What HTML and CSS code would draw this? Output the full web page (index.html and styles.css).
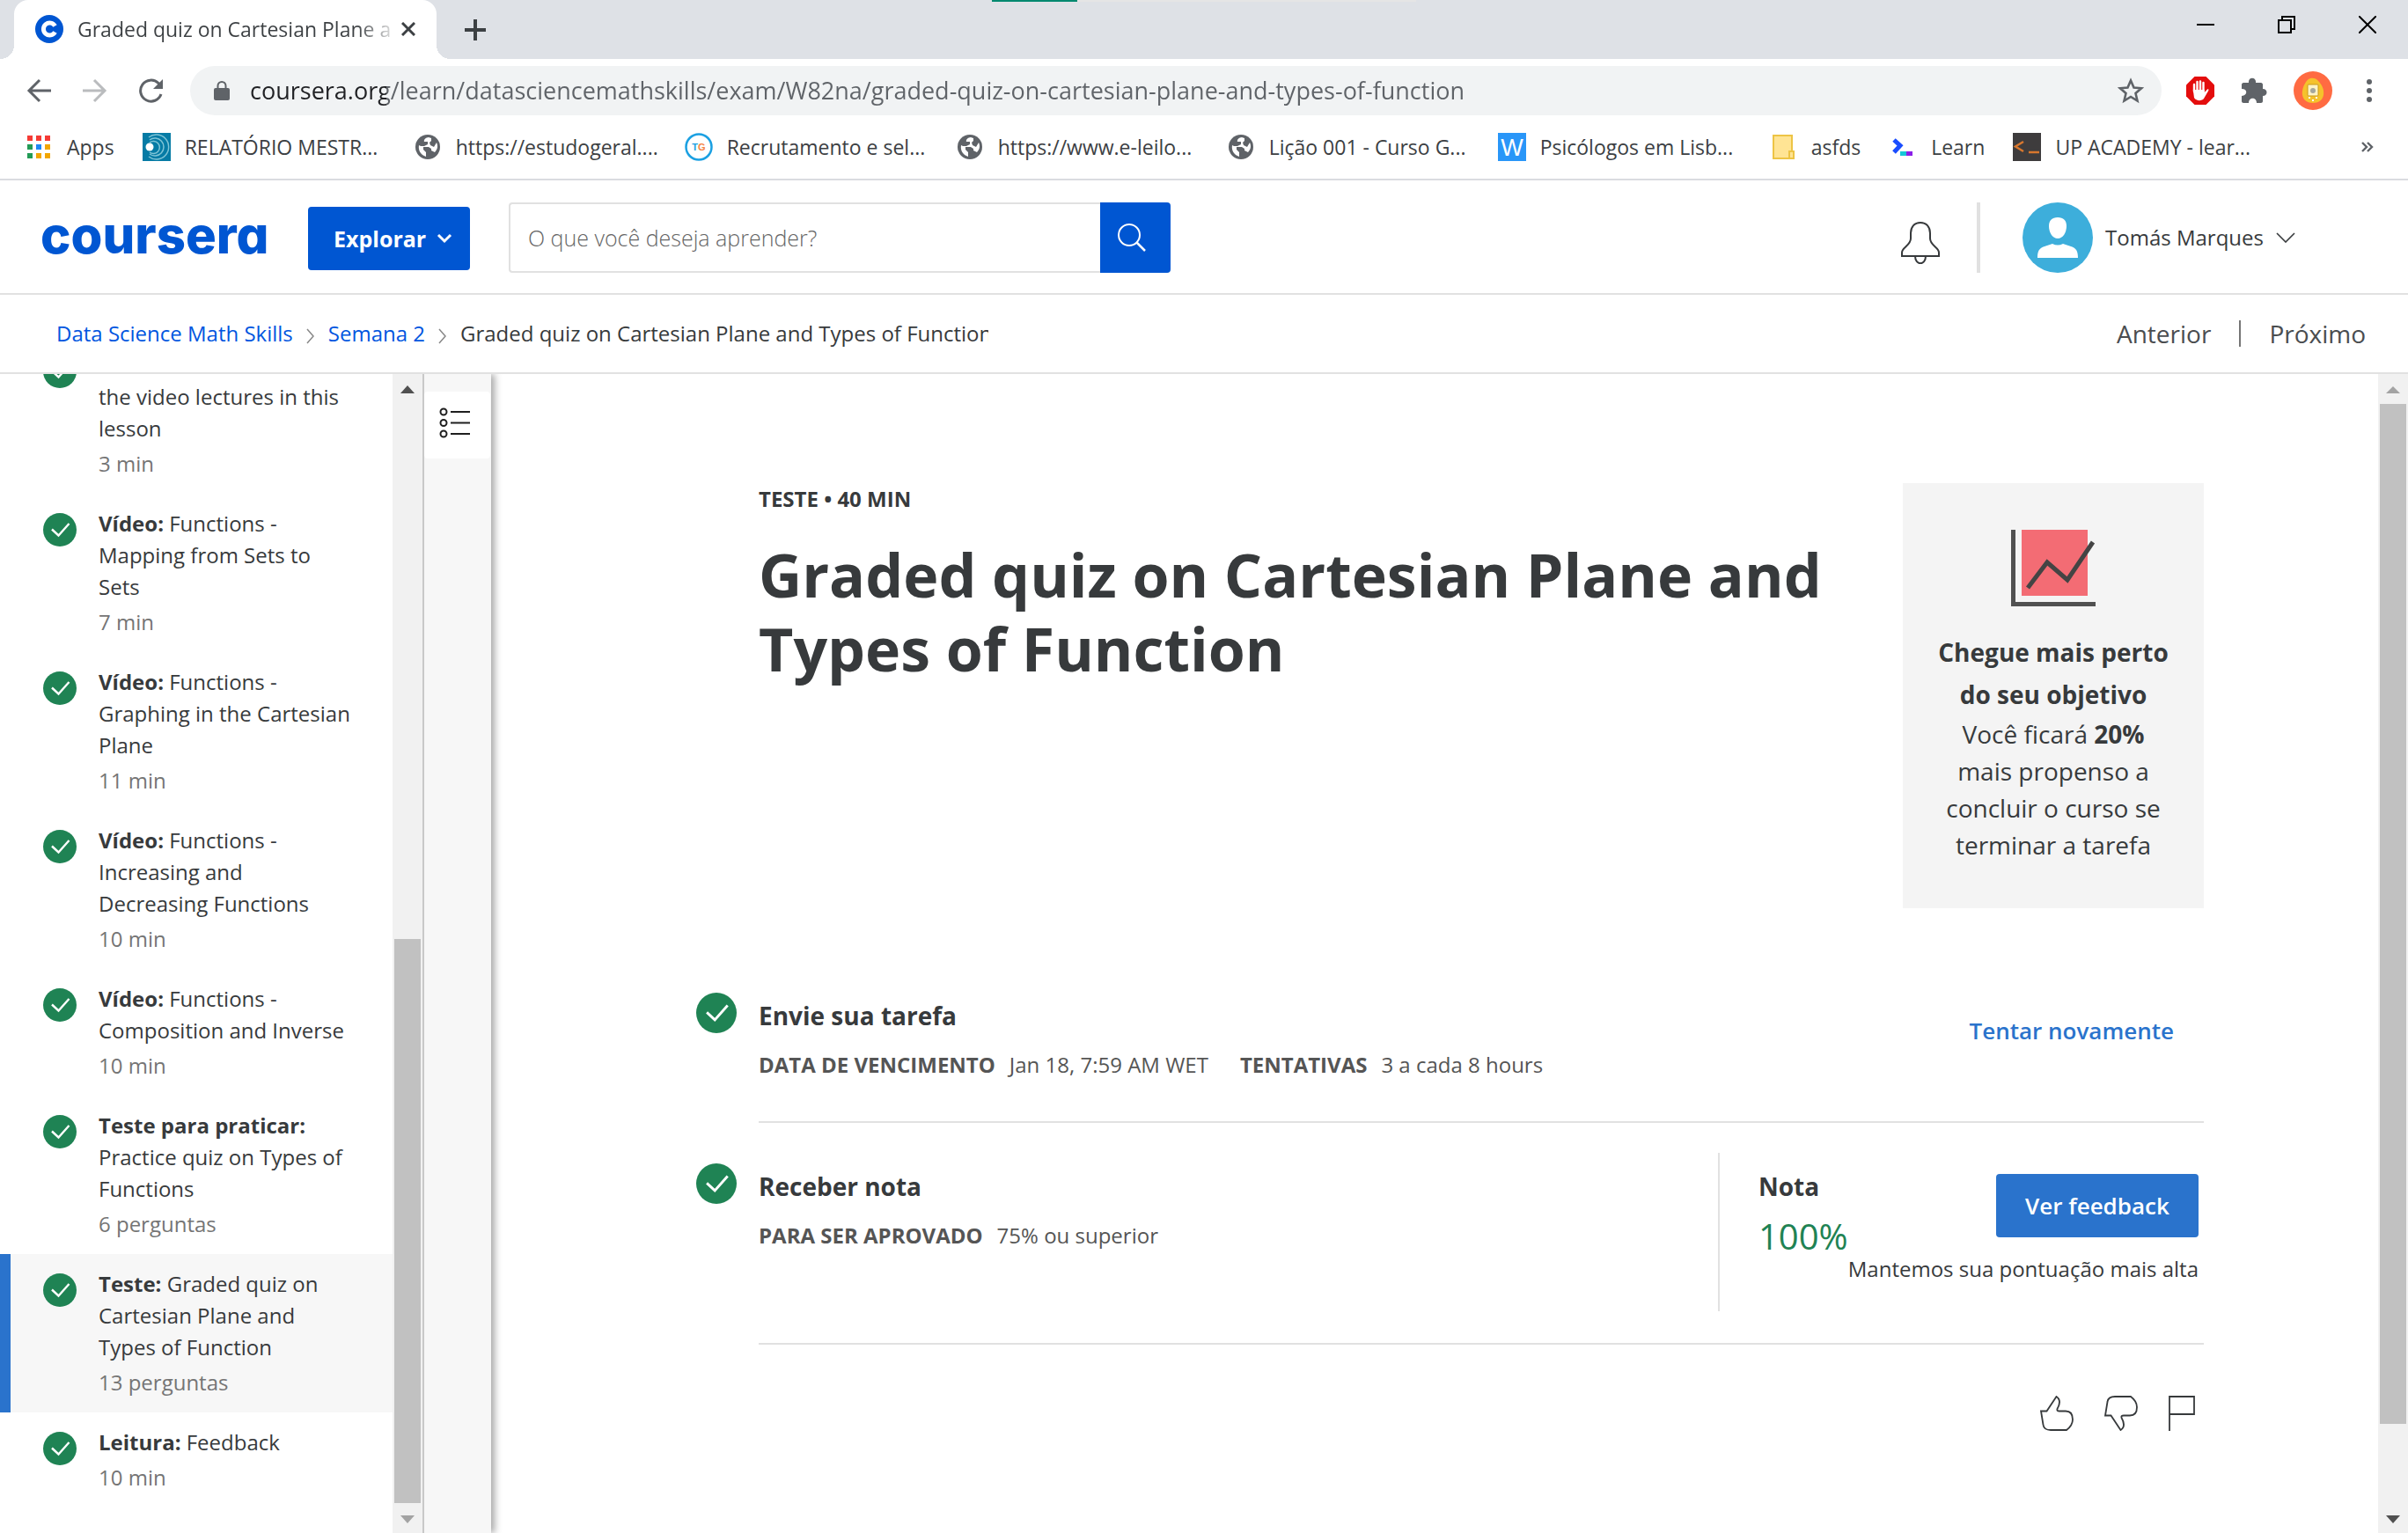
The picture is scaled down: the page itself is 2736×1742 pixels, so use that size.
FILE: index.html
```html
<!DOCTYPE html>
<html lang="pt">
<head>
<meta charset="utf-8">
<meta name="viewport" content="width=device-width, initial-scale=1">
<title>Graded quiz on Cartesian Plane and Types of Function | Coursera</title>
<link rel="stylesheet" href="styles.css">
</head>
<body>
<svg class="defs" aria-hidden="true">
  <symbol id="check" viewBox="0 0 38 38"><circle cx="19" cy="19" r="19" fill="#1f8354"/><path d="M10 18.500L17.500 25.500L29.500 12" fill="none" stroke="#fff" stroke-width="2.400"/></symbol>
  <symbol id="globe" viewBox="0 0 28 28"><circle cx="14" cy="14" r="14" fill="#5f6368"/><path d="M15 3C12 3 9 6 10 8H14V11L10 13H6L4 12C3 18 6 23 12 25V20L9 17V14H15L18 16V18L22 20C25 17 26 13 24 9L21 14L17 12L16 9L18 7V4Z" fill="#fff"/></symbol>
  <symbol id="thumb" viewBox="0 0 38 40"><path d="M1 17.500H7.500L18.500 1C23 4 23.500 8 19.500 15C19 17 20 17.500 22 17.500H29C34 17.500 37 21 37 27C37 33 34 36 30 39H12C7 39 4 37 3.500 33Z" fill="none" stroke="#373a3c" stroke-width="1.800"/></symbol>
</svg>

<header class="browser">
  <div class="tabstrip">
    <div class="tab">
      <svg class="tab-icon" viewBox="0 0 32 32"><circle cx="16" cy="16" r="16" fill="#0056d2"/><path d="M22.500 12.500A7 7 0 1 0 22.500 19.500" fill="none" stroke="#fff" stroke-width="5"/></svg>
      <span class="tab-title">Graded quiz on Cartesian Plane a</span>
      <button class="plain" aria-label="Fechar guia"><svg width="16" height="16" viewBox="0 0 16 16"><path d="M1 1L15 15M15 1L1 15" stroke="#3c4043" stroke-width="3"/></svg></button>
    </div>
    <button class="plain new-tab" aria-label="Nova guia"><svg width="24" height="24" viewBox="0 0 24 24"><path d="M12 0V24M0 12H24" stroke="#3c4043" stroke-width="4"/></svg></button>
    <div class="loading"><span class="loading-done"></span></div>
    <div class="window-controls">
      <button class="plain" aria-label="Minimizar"><svg width="20" height="20" viewBox="0 0 20 20"><path d="M0 10H20" stroke="#000" stroke-width="2"/></svg></button>
      <button class="plain" aria-label="Restaurar"><svg width="20" height="20" viewBox="0 0 20 20"><path d="M1 5H15V19H1ZM5 5V1H19V15H15" fill="none" stroke="#000" stroke-width="2"/></svg></button>
      <button class="plain" aria-label="Fechar"><svg width="20" height="20" viewBox="0 0 20 20"><path d="M0 0L20 20M20 0L0 20" stroke="#000" stroke-width="2"/></svg></button>
    </div>
  </div>

  <div class="toolbar">
    <div class="nav-buttons">
      <button class="plain" aria-label="Voltar"><svg width="28" height="28" viewBox="0 0 28 28"><path d="M28 14H3M15 2L3 14L15 26" fill="none" stroke="#5f6368" stroke-width="3"/></svg></button>
      <button class="plain" aria-label="Avançar"><svg width="28" height="28" viewBox="0 0 28 28"><path d="M0 14H25M13 2L25 14L13 26" fill="none" stroke="#babcbe" stroke-width="3"/></svg></button>
      <button class="plain" aria-label="Recarregar"><svg width="28" height="28" viewBox="0 0 28 28"><path d="M25 18A12 12 0 1 1 22 5.500L24 8" fill="none" stroke="#5f6368" stroke-width="3"/><path d="M27 1V12H16Z" fill="#5f6368"/></svg></button>
    </div>
    <form class="omnibox">
      <svg width="18" height="22" viewBox="0 0 18 22"><rect y="8" width="18" height="14" rx="2" fill="#5f6368"/><path d="M4.500 9V5.500A4.500 4.500 0 0 1 13.500 5.500V9" fill="none" stroke="#5f6368" stroke-width="2"/></svg>
      <input class="url" type="text" aria-label="Endereço" value="coursera.org/learn/datasciencemathskills/exam/W82na/graded-quiz-on-cartesian-plane-and-types-of-function">
      <button type="button" class="plain" aria-label="Favorito"><svg width="30" height="30" viewBox="0 0 30 30"><path d="M15 3.500L18.500 11.500L27 12.300L20.500 18L22.500 26.500L15 22L7.500 26.500L9.500 18L3 12.300L11.500 11.500Z" fill="none" stroke="#5f6368" stroke-width="2.600"/></svg></button>
    </form>
    <div class="extensions">
      <button class="plain" aria-label="AdBlock"><svg width="32" height="32" viewBox="0 0 32 32"><path d="M9.500 0H22.500L32 9.500V22.500L22.500 32H9.500L0 22.500V9.500Z" fill="#e40d0d"/><path d="M9 17V9M12.500 17V6M16 17V5.500M19.500 17V7" stroke="#fff" stroke-width="2.400" stroke-linecap="round"/><path d="M7.800 15H20.700V18L24 14.500C25.500 14 26 15 25 16.500L20 25C18 28 11 28 9 24Z" fill="#fff"/></svg></button>
      <button class="plain" aria-label="Extensões"><svg width="30" height="30" viewBox="0 0 30 30"><path d="M3 6H9C8 -1 18 -1 17 6H23C24 6 25 7 25 8V13C31 13 31 21 25 21V27C25 28 24 29 23 29H18C18 22 9 22 9 29H3C2 29 1 28 1 27V21C8 20 8 13 1 13V8C1 7 2 6 3 6Z" fill="#5f6368"/></svg></button>
      <button class="plain" aria-label="Perfil"><svg width="44" height="44" viewBox="0 0 44 44"><circle cx="22" cy="22" r="22" fill="#ff6b42"/><path d="M17 9C20 7 25 7 28 11C32 15 35 20 34 27C33 33 28 36 22 36S11 33 10 27C9 20 13 12 17 9Z" fill="#f5c22c"/><rect x="16" y="15" width="12" height="13" rx="1" fill="#fff3c4" stroke="#c99a1c"/><circle cx="22" cy="22" r="3" fill="#a5a79c"/><path d="M17 30h2M21 33h2M25 30h2" stroke="#fff" stroke-width="2"/></svg></button>
      <button class="plain" aria-label="Menu"><svg width="6" height="26" viewBox="0 0 6 26"><circle cx="3" cy="3" r="3"/><circle cx="3" cy="13" r="3"/><circle cx="3" cy="23" r="3"/></svg></button>
    </div>
  </div>

  <nav class="bookmarks" aria-label="Favoritos">
    <a href="#"><svg viewBox="0 0 32 32"><path d="M3 3h6v6H3zM13 3h6v6h-6zM23 3h6v6h-6z" fill="#f53b35"/><path d="M3 13h6v6H3zM3 23h6v6H3z" fill="#239b56"/><path d="M13 13h6v6h-6z" fill="#1e88f5"/><path d="M23 13h6v6h-6zM13 23h6v6h-6zM23 23h6v6h-6z" fill="#f2a600"/></svg><span>Apps</span></a>
    <a href="#" class="wide"><svg viewBox="0 0 32 32"><path d="M0 0H32V32H0Z" fill="#067ba5"/><g fill="none" stroke="#7fc4d6" stroke-width="1.500"><path d="M7 5A14 14 0 1 1 7 27M8 8A10 10 0 1 1 8 24M8 11A7 7 0 1 1 8 22"/></g><circle cx="8" cy="16" r="4.500" fill="#fff"/></svg><span>RELATÓRIO MESTR...</span></a>
    <a href="#" class="wide"><svg viewBox="-2 -2 32 32"><use href="#globe" width="28" height="28"/></svg><span>https://estudogeral....</span></a>
    <a href="#" class="wide"><svg viewBox="0 0 32 32"><circle cx="16" cy="16" r="14.500" fill="#fff" stroke="#1ba0e2" stroke-width="2.500"/><text x="16" y="20" text-anchor="middle" class="tg" fill="#1ba0e2">T<tspan fill="#f58345">G</tspan></text></svg><span>Recrutamento e sel...</span></a>
    <a href="#" class="wide"><svg viewBox="-2 -2 32 32"><use href="#globe" width="28" height="28"/></svg><span>https://www.e-leilo...</span></a>
    <a href="#" class="wide"><svg viewBox="-2 -2 32 32"><use href="#globe" width="28" height="28"/></svg><span>Lição 001 - Curso G...</span></a>
    <a href="#" class="wide"><svg viewBox="0 0 32 32"><path d="M0 0H32V32H0Z" fill="#2996f8"/><text x="16" y="26" text-anchor="middle" class="w" fill="#fff">W</text></svg><span>Psicólogos em Lisb...</span></a>
    <a href="#"><svg viewBox="0 0 32 32"><path d="M5 3H26V21H28V29H5Z" fill="#ffe494" stroke="#edc445" stroke-width="2"/><path d="M23 29V21H28V29Z" fill="#ffe494" stroke="#edc445" stroke-width="2"/></svg><span>asfds</span></a>
    <a href="#"><svg viewBox="0 0 32 32"><path d="M6 8L13 14.500L6 22" fill="none" stroke="#1a4dff" stroke-width="5"/><path d="M13 21H20V26H13Z" fill="#16c8d8"/><path d="M20 21H27V26H20Z" fill="#8a1fe8"/></svg><span>Learn</span></a>
    <a href="#" class="wide"><svg viewBox="0 0 32 32"><path d="M0 0H32V32H0Z" fill="#3e3c3d"/><path d="M12 10L3 15.500L12 21M18 22H30" fill="none" stroke="#d8772e" stroke-width="2.500"/></svg><span>UP ACADEMY - lear...</span></a>
    <button class="plain more" aria-label="Mais favoritos"><svg width="14" height="12" viewBox="0 0 14 12"><path d="M1 1L6 6L1 11M7 1L12 6L7 11" fill="none" stroke="#5f6368" stroke-width="2.400"/></svg></button>
  </nav>
</header>

<header class="site-header">
  <a href="#" class="logo">coursera</a>
  <button class="explore">Explorar <svg width="18" height="12" viewBox="0 0 18 12"><path d="M2 2L9 9L16 2" fill="none" stroke="#fff" stroke-width="3"/></svg></button>
  <form class="search">
    <input type="text" aria-label="Pesquisar" placeholder="O que você deseja aprender?">
    <button type="button" aria-label="Buscar"><svg width="34" height="34" viewBox="0 0 34 34"><circle cx="14" cy="14" r="12" fill="none" stroke="#fff" stroke-width="2"/><path d="M22.500 22.500L32 32" stroke="#fff" stroke-width="2.500"/></svg></button>
  </form>
  <div class="account">
    <button class="plain bell" aria-label="Notificações"><svg width="44" height="48" viewBox="0 0 44 48"><path d="M1 39V35C1 29 11 27 11 19V13C11 6 15 1 22 1S33 6 33 13V19C33 27 43 29 43 35V39ZM16 39C16 50 28 50 28 39" fill="none" stroke="#373a3c" stroke-width="2"/></svg></button>
    <button class="plain profile"><svg width="80" height="80" viewBox="0 0 80 80"><circle cx="40" cy="40" r="40" fill="#3daedb"/><path d="M40 17C47 17 50 21 50 27C50 34 46 41 40 41S30 34 30 27C30 21 33 17 40 17Z" fill="#fff"/><path d="M17 63C17 55 19 52 25 50L34 47C38 49 42 49 46 47L55 50C61 52 63 55 63 63Z" fill="#fff"/></svg><span>Tomás Marques</span><svg width="22" height="12" viewBox="0 0 22 12"><path d="M1 1L11 11L21 1" fill="none" stroke="#373a3c" stroke-width="1.600"/></svg></button>
  </div>
</header>

<div class="crumbbar">
  <nav class="crumbs" aria-label="Trilha">
    <a href="#">Data Science Math Skills</a>
    <svg width="10" height="18" viewBox="0 0 10 18"><path d="M1 1L8 9L1 17" fill="none" stroke="#888" stroke-width="1.500"/></svg>
    <a href="#">Semana 2</a>
    <svg width="10" height="18" viewBox="0 0 10 18"><path d="M1 1L8 9L1 17" fill="none" stroke="#888" stroke-width="1.500"/></svg>
    <span class="current">Graded quiz on Cartesian Plane and Types of Function</span>
  </nav>
  <nav class="pager" aria-label="Navegação"><a href="#">Anterior</a><a href="#">Próximo</a></nav>
</div>

<div class="body">
  <aside class="sidebar">
    <ul class="lessons">
      <li class="lesson continued"><svg><use href="#check"/></svg><div><a href="#">the video lectures in this lesson</a><p>3 min</p></div></li>
      <li class="lesson"><svg><use href="#check"/></svg><div><a href="#"><b>Vídeo:</b> Functions - Mapping from Sets to Sets</a><p>7 min</p></div></li>
      <li class="lesson"><svg><use href="#check"/></svg><div><a href="#"><b>Vídeo:</b> Functions - Graphing in the Cartesian Plane</a><p>11 min</p></div></li>
      <li class="lesson"><svg><use href="#check"/></svg><div><a href="#"><b>Vídeo:</b> Functions - Increasing and Decreasing Functions</a><p>10 min</p></div></li>
      <li class="lesson"><svg><use href="#check"/></svg><div><a href="#"><b>Vídeo:</b> Functions - Composition and Inverse</a><p>10 min</p></div></li>
      <li class="lesson"><svg><use href="#check"/></svg><div><a href="#"><b>Teste para praticar:</b> Practice quiz on Types of Functions</a><p>6 perguntas</p></div></li>
      <li class="lesson active"><svg><use href="#check"/></svg><div><a href="#"><b>Teste:</b> Graded quiz on Cartesian Plane and Types of Function</a><p>13 perguntas</p></div></li>
      <li class="lesson"><svg><use href="#check"/></svg><div><a href="#"><b>Leitura:</b> Feedback</a><p>10 min</p></div></li>
    </ul>
    <div class="scrollbar low">
      <svg viewBox="0 0 34 34"><path d="M9 22H25L17 13Z" fill="#505050"/></svg>
      <div class="track"><div class="thumb"></div></div>
      <svg viewBox="0 0 34 34"><path d="M9 14H25L17 23Z" fill="#a3a3a3"/></svg>
    </div>
  </aside>
  <div class="rail">
    <button class="plain" aria-label="Lista de itens"><svg width="36" height="36" viewBox="0 0 36 36"><g fill="none" stroke="#1f1f1f" stroke-width="2"><circle cx="5" cy="5" r="3.500"/><circle cx="5" cy="17.500" r="3.500"/><circle cx="5" cy="30" r="3.500"/><path d="M13 5H35M13 17.500H35M13 30H35"/></g></svg></button>
  </div>

  <main class="content">
    <section class="intro">
      <div class="heading">
        <p class="kind">TESTE • 40 MIN</p>
        <h1>Graded quiz on Cartesian Plane and Types of Function</h1>
      </div>
      <aside class="goal">
        <svg width="96" height="88" viewBox="0 0 96 88"><path d="M12 0H87V75H12Z" fill="#f36c74"/><path d="M2.500 0V84.500H96" fill="none" stroke="#505050" stroke-width="5"/><path d="M19 66L41 37L64 57L93 14" fill="none" stroke="#444" stroke-width="5"/></svg>
        <h2>Chegue mais perto do seu objetivo</h2>
        <p>Você ficará <b>20%</b> mais propenso a concluir o curso se terminar a tarefa</p>
      </aside>
    </section>

    <section class="step">
      <svg class="step-check"><use href="#check"/></svg>
      <div class="step-body submit">
        <div class="step-text">
          <h3>Envie sua tarefa</h3>
          <dl><div><dt>DATA DE VENCIMENTO</dt><dd>Jan 18, 7:59 AM WET</dd></div><div><dt>TENTATIVAS</dt><dd>3 a cada 8 hours</dd></div></dl>
        </div>
        <a href="#" class="retry">Tentar novamente</a>
      </div>
    </section>

    <section class="step">
      <svg class="step-check"><use href="#check"/></svg>
      <div class="step-body receive">
        <div class="step-text">
          <h3>Receber nota</h3>
          <dl><div><dt>PARA SER APROVADO</dt><dd>75% ou superior</dd></div></dl>
        </div>
        <div class="grade">
          <div class="score"><h3>Nota</h3><p>100%</p></div>
          <div class="feedback"><button>Ver feedback</button><p>Mantemos sua pontuação mais alta</p></div>
        </div>
      </div>
    </section>

    <div class="reactions">
      <button class="plain" aria-label="Gostei"><svg width="38" height="40"><use href="#thumb"/></svg></button>
      <button class="plain flip" aria-label="Não gostei"><svg width="38" height="40"><use href="#thumb"/></svg></button>
      <button class="plain" aria-label="Denunciar"><svg width="30" height="40" viewBox="0 0 30 40"><path d="M1 40V1H29V21H1" fill="none" stroke="#373a3c" stroke-width="1.800"/></svg></button>
    </div>
  </main>

  <div class="scrollbar high">
    <svg viewBox="0 0 34 34"><path d="M9 22H25L17 14Z" fill="#a3a3a3"/></svg>
    <div class="track"><div class="thumb"></div></div>
    <svg viewBox="0 0 34 34"><path d="M9 14H25L17 23Z" fill="#505050"/></svg>
  </div>
</div>
</body>
</html>
```
FILE: styles.css
```css
* { box-sizing: border-box; }

body {
  margin: 0;
  height: 100vh;
  display: flex;
  flex-direction: column;
  overflow: hidden;
  background: #fff;
  color: #373a3c;
  font-family: "Open Sans", "Noto Sans", sans-serif;
  font-size: 24px;
  line-height: 36px;
}

h1, h2, h3, p, ul, dl, dd { margin: 0; padding: 0; }
a { color: inherit; text-decoration: none; }
button, input { font: inherit; }
svg { display: block; flex: none; }
.defs { position: absolute; width: 0; height: 0; }

.plain {
  display: flex;
  align-items: center;
  padding: 0;
  border: 0;
  background: none;
  color: inherit;
  text-align: left;
}

/* Browser chrome */
.browser {
  flex: none;
  border-bottom: 2px solid #dadce0;
  color: #3c4043;
  font-size: 23px;
}

.tabstrip {
  position: relative;
  display: flex;
  height: 67px;
  padding-left: 16px;
  background: #dee1e6;
}

.tab {
  position: relative;
  display: flex;
  align-items: center;
  width: 480px;
  padding: 0 24px 2px;
  border-radius: 16px 16px 0 0;
  background: #fff;
}
.tab::before, .tab::after {
  content: "";
  position: absolute;
  bottom: 0;
  width: 16px;
  height: 16px;
}
.tab::before { right: 100%; background: radial-gradient(circle at 0 0, transparent 16px, #fff 16px); }
.tab::after { left: 100%; background: radial-gradient(circle at 100% 0, transparent 16px, #fff 16px); }
.tab-icon { width: 32px; height: 32px; margin-right: 16px; }
.tab-title {
  flex: 1;
  margin-right: 8px;
  white-space: nowrap;
  color: transparent;
  background: linear-gradient(to right, #3c4043 88%, #e8e8e8 100%);
  background-clip: text;
}
.new-tab { margin-left: 32px; }

.loading {
  position: absolute;
  top: 0;
  left: 41.2%;
  width: 482px;
  height: 2px;
  background: #e5e5e5;
}
.loading-done { display: block; width: 20%; height: 2px; background: #00896f; }

.window-controls {
  display: flex;
  gap: 72px;
  margin-left: auto;
  padding: 0 36px 11px 0;
}

.toolbar {
  display: flex;
  align-items: center;
  height: 64px;
  padding: 8px 41px 0 30px;
}
.nav-buttons { display: flex; gap: 36px; width: 186px; }
.omnibox {
  flex: 1;
  display: flex;
  align-items: center;
  height: 56px;
  padding: 0 20px 0 27px;
  border-radius: 28px;
  background: #f1f3f4;
}
.url {
  flex: 1;
  padding: 0;
  margin-left: 23px;
  border: 0;
  outline: 0;
  font-size: 27px;
  color: transparent;
  background: linear-gradient(to right, #202124 155px, #5f6368 155px);
  background-clip: text;
}
.extensions { display: flex; align-items: center; gap: 30px; margin-left: 28px; fill: #5f6368; }
.extensions button:last-child { margin-left: 9px; }

.bookmarks {
  display: flex;
  align-items: center;
  gap: 32px;
  height: 72px;
  padding: 0 39px 0 28px;
}
.bookmarks a { display: flex; align-items: center; gap: 16px; white-space: nowrap; }
.bookmarks a svg { width: 32px; height: 32px; }
.wide span { width: 228px; }
.more { margin-left: auto; }
.tg { font: bold 11px "Liberation Sans", sans-serif; }
.w { font: 27px "Liberation Sans", sans-serif; }

/* Site header */
.site-header {
  flex: none;
  display: flex;
  align-items: center;
  height: 130px;
  padding: 2px 128px 0 46px;
  border-bottom: 2px solid #e1e1e1;
}
.logo {
  width: 304px;
  padding-bottom: 6px;
  color: #0056d2;
  font: 800 58px/60px Inter, sans-serif;
  font-feature-settings: "cv11";
}
.explore {
  display: flex;
  align-items: center;
  gap: 12px;
  width: 184px;
  height: 72px;
  margin: 2px 44px 0 0;
  padding: 0 0 0 29px;
  border: 0;
  border-radius: 4px;
  background: #0056d2;
  color: #fff;
  font-size: 25px;
  font-weight: 700;
}
.search { display: flex; width: 752px; height: 80px; }
.search input {
  flex: 1;
  min-width: 0;
  padding: 0 20px;
  border: 2px solid #e1e1e1;
  border-right: 0;
  border-radius: 4px 0 0 4px;
  outline: 0;
  font-size: 25px;
  font-weight: 300;
}
.search input::placeholder { color: #666; opacity: 1; }
.search button {
  display: flex;
  align-items: center;
  justify-content: center;
  width: 80px;
  padding: 0 8px 0 0;
  border: 0;
  border-radius: 0 4px 4px 0;
  background: #0056d2;
}
.account { display: flex; margin-left: auto; }
.bell { align-items: flex-end; padding: 0 42px 10px 0; border-right: 4px solid #e1e1e1; }
.profile { gap: 14px; margin-left: 48px; }

/* Breadcrumbs */
.crumbbar {
  flex: none;
  display: flex;
  align-items: center;
  justify-content: space-between;
  height: 90px;
  padding: 0 48px 0 64px;
  border-bottom: 2px solid #e1e1e1;
}
.crumbs { display: flex; align-items: center; gap: 15px; white-space: nowrap; }
.crumbs a { color: #0156e0; }
.crumbs svg { margin-top: 6px; }
.current { max-width: 600px; overflow: hidden; }
.pager { display: flex; align-items: center; font-size: 28px; color: #4a4d50; }
.pager a + a { margin-left: 32px; padding-left: 32px; line-height: 30px; border-left: 2px solid #757575; }

/* Course outline */
.body { flex: 1; min-height: 0; display: flex; }
.sidebar { flex: none; display: flex; width: 482px; border-right: 2px solid #c9c9c9; }
.lessons {
  flex: 1;
  display: flex;
  flex-direction: column;
  justify-content: flex-end;
  overflow: hidden;
  padding-bottom: 29px;
  list-style: none;
}
.lesson {
  flex: none;
  display: flex;
  gap: 25px;
  padding: 16px 45px 16px 37px;
  border-left: 12px solid transparent;
}
.lesson svg { width: 38px; height: 38px; margin-top: 6px; }
.lesson a { display: block; }
.lesson p { margin-top: 4px; color: #757575; }
.continued a { padding-top: 36px; }
.active { border-color: #2a73cc; background: #f7f7f7; }

.rail {
  flex: none;
  position: relative;
  width: 76px;
  padding: 20px 1px 0 0;
  background: #f7f7f7;
  box-shadow: 4px 0 8px rgba(0, 0, 0, 0.35);
  clip-path: inset(0 -16px 0 0);
}
.rail button {
  width: 100%;
  height: 76px;
  padding: 0 0 5px 17px;
  border-radius: 4px;
  background: #fff;
}

.scrollbar { flex: none; display: flex; flex-direction: column; width: 34px; background: #f1f1f1; }
.scrollbar svg { width: 34px; height: 34px; }
.track { flex: 1; display: flex; flex-direction: column; padding: 0 2px; }
.thumb { background: #c1c1c1; }
.low .track { justify-content: flex-end; }
.low .thumb { height: 51.3%; }
.high .thumb { height: 92.8%; }

/* Quiz page */
.content { flex: 1; padding: 124px 198px 0 233px; }
.intro { display: flex; justify-content: space-between; gap: 40px; margin-bottom: 50px; padding-left: 71px; }
.kind { font-weight: 700; }
h1 { margin-top: 26px; font-size: 68px; line-height: 84px; font-weight: 700; }
.goal {
  flex: none;
  width: 342px;
  padding: 53px 38px 51px;
  background: #f4f4f4;
  text-align: center;
  font-size: 28px;
  line-height: 42px;
}
.goal svg { margin: 0 auto 27px; }
.goal h2 { font-size: 28px; line-height: 48px; font-weight: 700; }

.step { display: flex; }
.step-check { width: 46px; height: 46px; margin: 46px 25px 0 0; }
.step-body { flex: 1; display: flex; justify-content: space-between; border-bottom: 2px solid #e1e1e1; }
.submit { height: 194px; }
.receive { height: 252px; }
.step-text { padding-top: 52px; }
h3 { font-size: 28px; line-height: 40px; font-weight: 700; }
dl { display: flex; gap: 36px; margin-top: 18px; color: #555; }
dl div { display: flex; gap: 16px; }
dt { font-weight: 700; }
.retry { padding: 71px 34px 0 0; color: #2a73cc; font-size: 26px; font-weight: 600; }
.grade {
  display: flex;
  justify-content: space-between;
  width: 552px;
  height: 180px;
  margin-top: 34px;
  padding: 18px 6px 0 44px;
  border-left: 2px solid #e1e1e1;
}
.score p { margin-top: 10px; color: #1f8354; font-size: 40px; line-height: 54px; }
.feedback { display: flex; flex-direction: column; align-items: flex-end; padding-top: 6px; margin-left: -40px; }
.feedback button {
  width: 230px;
  height: 72px;
  padding: 0;
  border: 0;
  border-radius: 4px;
  background: #2a73cc;
  color: #fff;
  font-size: 26px;
  font-weight: 600;
}
.feedback p { margin-top: 18px; white-space: nowrap; }

.reactions { display: flex; justify-content: flex-end; gap: 35px; padding: 58px 10px 0 0; }
.flip { transform: scaleY(-1); }
```
